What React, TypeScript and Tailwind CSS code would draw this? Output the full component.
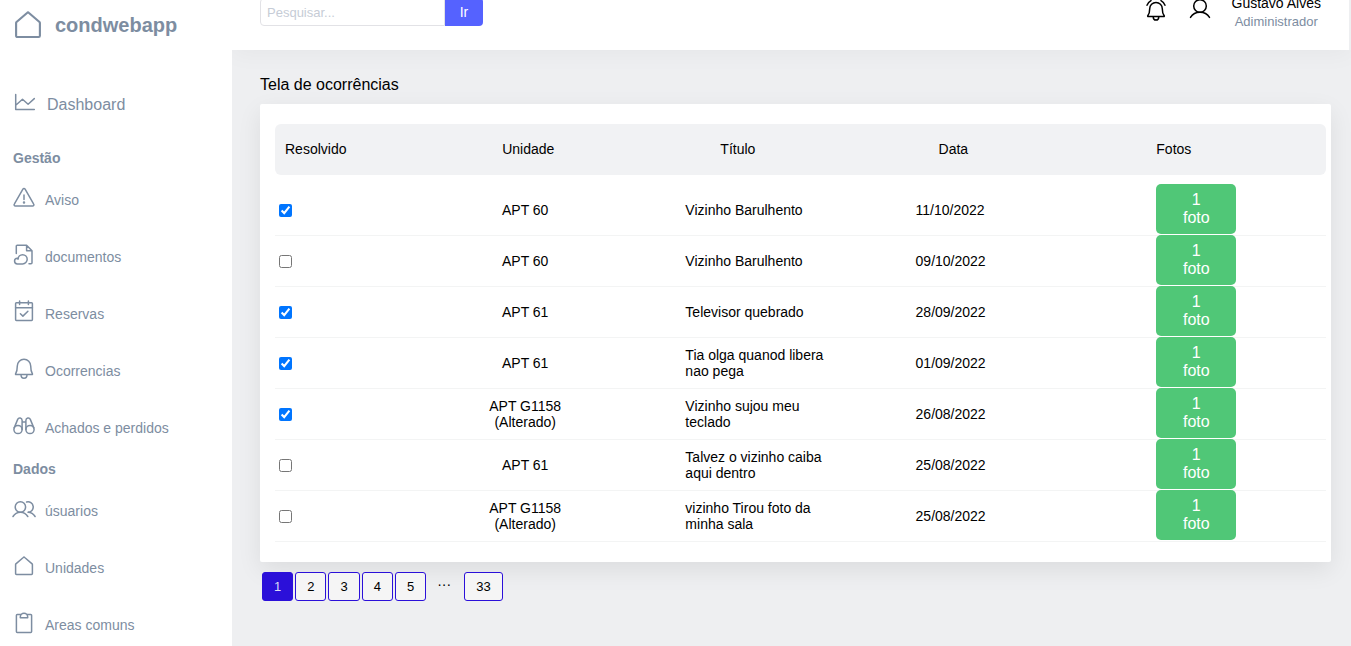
import { useState } from 'react';
import type { ReactNode } from 'react';

type Link = { label: string; icon: ReactNode };
type Occurrence = { done: boolean; unit: string; title: string; date: string };

function Icon({ className = 'size-6', children }: { className?: string; children: ReactNode }) {
  return (
    <svg
      viewBox="0 0 24 24"
      className={className}
      fill="none"
      stroke="currentColor"
      strokeWidth="1.5"
      strokeLinecap="round"
      strokeLinejoin="round"
      aria-hidden="true"
    >
      {children}
    </svg>
  );
}

const HouseIcon = ({ className }: { className?: string }) => (
  <Icon className={className}>
    <path d="M3.6 10.6a1 1 0 0 1 .3-.7l7.4-6.4a1 1 0 0 1 1.4 0l7.4 6.4a1 1 0 0 1 .3.7v9a.9.9 0 0 1-.9.9h-15a.9.9 0 0 1-.9-.9z" />
  </Icon>
);

const ChartIcon = () => (
  <Icon>
    <path d="M2.7 3.6v15h18.6M3 14l6.5-5.8 5.6 5 6.2-5.6" />
  </Icon>
);

const WarningIcon = () => (
  <Icon>
    <path d="M10.9 3.2a1.3 1.3 0 0 1 2.2 0l8.6 14.9a1.3 1.3 0 0 1-1.1 2H3.4a1.3 1.3 0 0 1-1.1-2zM12 9v4.6" />
    <circle cx="12" cy="16.5" r=".5" fill="currentColor" />
  </Icon>
);

const FileCloudIcon = () => (
  <Icon>
    <path d="M4.3 10.6V3a.8.8 0 0 1 .8-.8h9.5l5.4 5.5v12.1a1 1 0 0 1-1 1h-2M14.6 2.2v5.5H20" />
    <path d="M6 16.3a4.6 4.6 0 1 1 4.6 4.6H5.4a2.8 2.8 0 0 1 0-5.7q.5 0 .9.1" />
  </Icon>
);

const CalendarIcon = () => (
  <Icon>
    <rect x="3.6" y="2.7" width="16.8" height="17.7" rx=".8" />
    <path d="M3.6 7.8h16.8M7.6 1v3.6M16.4 1v3.6M8.4 13.8l2.5 2.3 5-4.8" />
  </Icon>
);

const BellIcon = () => (
  <Icon>
    <path d="M5.3 9a6.7 6.7 0 0 1 13.4 0c0 3.9.5 5.8 1.7 7.8a.5.5 0 0 1-.5.8H4.1a.5.5 0 0 1-.5-.8C4.8 14.8 5.3 12.9 5.3 9zM9 17.7a3 3.5 0 0 0 6 0" />
  </Icon>
);

const RingingBellIcon = () => (
  <Icon>
    <path d="M5.7 10.7a6.3 6.3 0 0 1 12.6 0c0 3.6.6 5.4 1.9 7.1a.5.5 0 0 1-.4.8H4.2a.5.5 0 0 1-.4-.8c1.3-1.7 1.9-3.5 1.9-7.1zM9.2 18.7a2.8 3.4 0 0 0 5.6 0M3 7.2a9 9 0 0 1 4-4.500M21 7.2a9 9 0 0 0-4-4.5" />
  </Icon>
);

const BinocularsIcon = () => (
  <Icon>
    <circle cx="6" cy="15.5" r="4.1" />
    <circle cx="18" cy="15.5" r="4.1" />
    <path d="M2.2 13.9 5.7 5.4a2.3 2.3 0 0 1 4.4.8v9.300M21.8 13.9l-3.5-8.5a2.3 2.3 0 0 0-4.4.8v9.300M10.100 8h3.800" />
  </Icon>
);

const UsersIcon = () => (
  <Icon>
    <circle cx="8.4" cy="10" r="5.2" />
    <path d="M1 19.5c1.6-2.7 4.3-4.3 7.4-4.3s5.8 1.6 7.4 4.3M14.6 5a5.2 5.2 0 1 1 1.4 10.200c3 0 5.5 1.6 7.1 4.3" />
  </Icon>
);

const UserIcon = () => (
  <Icon>
    <circle cx="12" cy="8" r="6.3" />
    <path d="M2.5 19.4c2-3.2 5.5-5.1 9.5-5.1s7.5 1.9 9.5 5.1" />
  </Icon>
);

const ClipboardIcon = () => (
  <Icon>
    <path d="M8.7 3.6H5.2a.8.8 0 0 0-.8.8v16.2a.8.8 0 0 0 .8.8h13.6a.8.8 0 0 0 .8-.8V4.4a.8.8 0 0 0-.8-.8h-3.5" />
    <path d="M8.3 6.8V6a3.7 3.7 0 0 1 7.4 0v.8z" />
  </Icon>
);

const management: Link[] = [
  { label: 'Aviso', icon: <WarningIcon /> },
  { label: 'documentos', icon: <FileCloudIcon /> },
  { label: 'Reservas', icon: <CalendarIcon /> },
  { label: 'Ocorrencias', icon: <BellIcon /> },
  { label: 'Achados e perdidos', icon: <BinocularsIcon /> },
];

const data: Link[] = [
  { label: 'úsuarios', icon: <UsersIcon /> },
  { label: 'Unidades', icon: <HouseIcon /> },
  { label: 'Areas comuns', icon: <ClipboardIcon /> },
];

const occurrences: Occurrence[] = [
  { done: true, unit: 'APT 60', title: 'Vizinho Barulhento', date: '11/10/2022' },
  { done: false, unit: 'APT 60', title: 'Vizinho Barulhento', date: '09/10/2022' },
  { done: true, unit: 'APT 61', title: 'Televisor quebrado', date: '28/09/2022' },
  { done: true, unit: 'APT 61', title: 'Tia olga quanod libera nao pega', date: '01/09/2022' },
  { done: true, unit: 'APT G1158 (Alterado)', title: 'Vizinho sujou meu teclado', date: '26/08/2022' },
  { done: false, unit: 'APT 61', title: 'Talvez o vizinho caiba aqui dentro', date: '25/08/2022' },
  { done: false, unit: 'APT G1158 (Alterado)', title: 'vizinho Tirou foto da minha sala', date: '25/08/2022' },
];

function NavGroup({ title, links }: { title: string; links: Link[] }) {
  return (
    <section>
      <h2 className="flex h-[26px] items-center pl-[13px] text-sm font-bold">{title}</h2>
      <ul>
        {links.map((link) => (
          <li key={link.label}>
            <a href="#" className="flex h-[57px] items-center gap-[9px] pl-3 text-sm">
              <span className="pb-[3px]">{link.icon}</span>
              {link.label}
            </a>
          </li>
        ))}
      </ul>
    </section>
  );
}

function Sidebar() {
  return (
    <aside className="relative z-10 h-screen w-[232px] shrink-0 overflow-hidden bg-white text-[#7d8da1]">
      <a href="#" className="flex h-[50px] items-center gap-2.5 pl-[11px] text-xl font-bold">
        <HouseIcon className="size-[34px]" />
        condwebapp
      </a>
      <nav className="pt-[26px]">
        <a href="#" className="mb-3 flex h-[57px] items-center gap-2.5 pl-[13px] text-base">
          <span className="pb-[3px]">
            <ChartIcon />
          </span>
          Dashboard
        </a>
        <NavGroup title="Gestão" links={management} />
        <NavGroup title="Dados" links={data} />
      </nav>
    </aside>
  );
}

function Header() {
  return (
    <header className="mr-0.5 flex h-[50px] items-end justify-between overflow-hidden bg-white pr-7 pb-6 pl-7">
      <form className="flex" onSubmit={(e) => e.preventDefault()}>
        <input
          type="text"
          aria-label="Pesquisar"
          placeholder="Pesquisar..."
          className="h-7 w-[185px] rounded-l border border-[#e2e2e6] px-1.5 text-[13px] outline-none placeholder:text-[#c6ccd6]"
        />
        <button type="submit" className="h-7 w-[38px] rounded-r bg-[#5562ff] text-sm text-white">
          Ir
        </button>
      </form>
      <div className="flex items-end">
        <button type="button" aria-label="Notificações" className="mr-5 mb-1">
          <RingingBellIcon />
        </button>
        <button type="button" aria-label="Perfil" className="mr-5 mb-1">
          <UserIcon />
        </button>
        <div className="-mb-1 text-center">
          <p className="text-sm leading-[22px]">Gustavo Alves</p>
          <p className="text-[13px] leading-4 text-[#7d8da1]">Adiministrador</p>
        </div>
      </div>
    </header>
  );
}

function OccurrenceTable() {
  const [rows, setRows] = useState(occurrences);
  const toggle = (index: number) =>
    setRows(rows.map((row, i) => (i === index ? { ...row, done: !row.done } : row)));
  return (
    <table className="w-full table-fixed border-separate border-spacing-0 text-left text-sm leading-4">
      <colgroup>
        <col className="w-[20%]" />
        <col className="w-[18%]" />
        <col className="w-[22%]" />
        <col className="w-[23%]" />
        <col className="w-[17%]" />
      </colgroup>
      <thead>
        <tr className="h-[51px] [&>th]:bg-[#f1f2f4] [&>th]:pb-0.5 [&>th]:font-normal">
          <th className="rounded-l-md pl-2.5">Resolvido</th>
          <th className="pl-[17px]">Unidade</th>
          <th className="pl-[46px]">Título</th>
          <th className="pl-[33px]">Data</th>
          <th className="rounded-r-md pl-[9px]">Fotos</th>
        </tr>
      </thead>
      <tbody className="before:block before:h-2.5 before:content-['']">
        {rows.map((row, i) => (
          <tr key={i} className="[&>td]:h-[51px] [&>td]:border-b [&>td]:border-[#f3f4f4] [&>td]:p-0 [&>td]:align-middle">
            <td>
              <input
                type="checkbox"
                aria-label={`Resolvido: ${row.title}`}
                checked={row.done}
                onChange={() => toggle(i)}
                className="ml-1 block size-[13px]"
              />
            </td>
            <td>
              <div className="w-20 text-center">{row.unit}</div>
            </td>
            <td>
              <div className="ml-[11px] w-[145px]">{row.title}</div>
            </td>
            <td>
              <div className="pl-2.5">{row.date}</div>
            </td>
            <td>
              <button
                type="button"
                className="-mt-px mb-px ml-[9px] block h-[50px] w-20 rounded-[5px] bg-[#50c777] px-5 text-base leading-[18px] text-white"
              >
                1 foto
              </button>
            </td>
          </tr>
        ))}
      </tbody>
    </table>
  );
}

function Pagination() {
  const [page, setPage] = useState(1);
  const base = 'h-[29px] rounded-[3px] border border-[#2b10d9] px-[11px] text-[13px]';
  const button = (n: number) => (
    <button
      key={n}
      type="button"
      onClick={() => setPage(n)}
      className={`${base} ${n === page ? 'bg-[#2b10d9] text-[#dcdcf5]' : 'bg-[#f5f5f5] text-black'}`}
    >
      {n}
    </button>
  );
  return (
    <nav aria-label="Paginação" className="flex gap-0.5 pt-2.5 pl-0.5">
      {[1, 2, 3, 4, 5].map(button)}
      <span className="w-[34px] pt-0.5 pr-0.5 text-center text-sm">···</span>
      {button(33)}
    </nav>
  );
}

export default function App() {
  return (
    <div className="flex h-screen overflow-hidden bg-[#eeeff1] font-['Liberation_Sans',Arial,sans-serif] text-black">
      <Sidebar />
      <div className="min-w-0 flex-1">
        <div className="shadow-[0_4px_24px_rgba(0,0,0,0.04)]">
          <Header />
        </div>
        <main className="pt-[23px] pr-5 pl-7">
          <h1 className="mb-[7px] text-base">Tela de ocorrências</h1>
          <section className="rounded-[2px] bg-white pt-5 pr-[5px] pb-5 pl-[15px] shadow-[0_8px_24px_rgba(0,0,0,0.08)]">
            <OccurrenceTable />
          </section>
          <Pagination />
        </main>
      </div>
    </div>
  );
}
